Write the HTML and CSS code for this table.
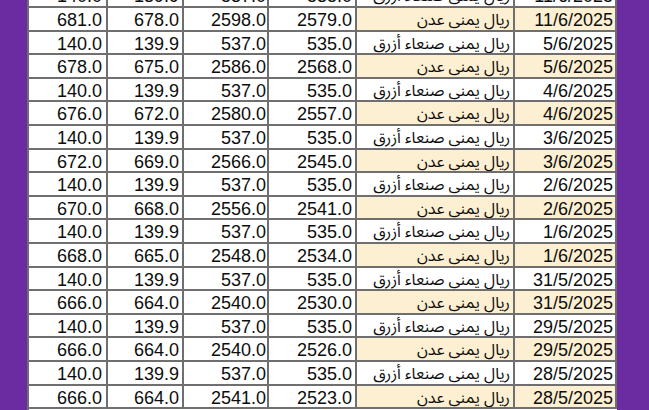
FILE: index.html
```html
<!DOCTYPE html>
<html lang="ar">
<head>
<meta charset="utf-8">
<title>أسعار الصرف</title>
<link rel="stylesheet" href="styles.css">
</head>
<body>
<div class="page">
  <div class="side side-left"></div>
  <div class="sheet">
    <div class="rows">
      <div class="row"><div class="c c1">140.0</div><div class="c c2">139.9</div><div class="c c3">537.0</div><div class="c c4">535.0</div><div class="c ar sanaa">ريال يمني صنعاء أزرق</div><div class="c dt">11/6/2025</div></div>
      <div class="row aden"><div class="c c1">681.0</div><div class="c c2">678.0</div><div class="c c3">2598.0</div><div class="c c4">2579.0</div><div class="c ar">ريال يمني عدن</div><div class="c dt">11/6/2025</div></div>
      <div class="row"><div class="c c1">140.0</div><div class="c c2">139.9</div><div class="c c3">537.0</div><div class="c c4">535.0</div><div class="c ar sanaa">ريال يمني صنعاء أزرق</div><div class="c dt">5/6/2025</div></div>
      <div class="row aden"><div class="c c1">678.0</div><div class="c c2">675.0</div><div class="c c3">2586.0</div><div class="c c4">2568.0</div><div class="c ar">ريال يمني عدن</div><div class="c dt">5/6/2025</div></div>
      <div class="row"><div class="c c1">140.0</div><div class="c c2">139.9</div><div class="c c3">537.0</div><div class="c c4">535.0</div><div class="c ar sanaa">ريال يمني صنعاء أزرق</div><div class="c dt">4/6/2025</div></div>
      <div class="row aden"><div class="c c1">676.0</div><div class="c c2">672.0</div><div class="c c3">2580.0</div><div class="c c4">2557.0</div><div class="c ar">ريال يمني عدن</div><div class="c dt">4/6/2025</div></div>
      <div class="row"><div class="c c1">140.0</div><div class="c c2">139.9</div><div class="c c3">537.0</div><div class="c c4">535.0</div><div class="c ar sanaa">ريال يمني صنعاء أزرق</div><div class="c dt">3/6/2025</div></div>
      <div class="row aden"><div class="c c1">672.0</div><div class="c c2">669.0</div><div class="c c3">2566.0</div><div class="c c4">2545.0</div><div class="c ar">ريال يمني عدن</div><div class="c dt">3/6/2025</div></div>
      <div class="row"><div class="c c1">140.0</div><div class="c c2">139.9</div><div class="c c3">537.0</div><div class="c c4">535.0</div><div class="c ar sanaa">ريال يمني صنعاء أزرق</div><div class="c dt">2/6/2025</div></div>
      <div class="row aden"><div class="c c1">670.0</div><div class="c c2">668.0</div><div class="c c3">2556.0</div><div class="c c4">2541.0</div><div class="c ar">ريال يمني عدن</div><div class="c dt">2/6/2025</div></div>
      <div class="row"><div class="c c1">140.0</div><div class="c c2">139.9</div><div class="c c3">537.0</div><div class="c c4">535.0</div><div class="c ar sanaa">ريال يمني صنعاء أزرق</div><div class="c dt">1/6/2025</div></div>
      <div class="row aden"><div class="c c1">668.0</div><div class="c c2">665.0</div><div class="c c3">2548.0</div><div class="c c4">2534.0</div><div class="c ar">ريال يمني عدن</div><div class="c dt">1/6/2025</div></div>
      <div class="row"><div class="c c1">140.0</div><div class="c c2">139.9</div><div class="c c3">537.0</div><div class="c c4">535.0</div><div class="c ar sanaa">ريال يمني صنعاء أزرق</div><div class="c dt">31/5/2025</div></div>
      <div class="row aden"><div class="c c1">666.0</div><div class="c c2">664.0</div><div class="c c3">2540.0</div><div class="c c4">2530.0</div><div class="c ar">ريال يمني عدن</div><div class="c dt">31/5/2025</div></div>
      <div class="row"><div class="c c1">140.0</div><div class="c c2">139.9</div><div class="c c3">537.0</div><div class="c c4">535.0</div><div class="c ar sanaa">ريال يمني صنعاء أزرق</div><div class="c dt">29/5/2025</div></div>
      <div class="row aden"><div class="c c1">666.0</div><div class="c c2">664.0</div><div class="c c3">2540.0</div><div class="c c4">2526.0</div><div class="c ar">ريال يمني عدن</div><div class="c dt">29/5/2025</div></div>
      <div class="row"><div class="c c1">140.0</div><div class="c c2">139.9</div><div class="c c3">537.0</div><div class="c c4">535.0</div><div class="c ar sanaa">ريال يمني صنعاء أزرق</div><div class="c dt">28/5/2025</div></div>
      <div class="row aden"><div class="c c1">666.0</div><div class="c c2">664.0</div><div class="c c3">2541.0</div><div class="c c4">2523.0</div><div class="c ar">ريال يمني عدن</div><div class="c dt">28/5/2025</div></div>
    </div>
  </div>
  <div class="side side-right"></div>
</div>
</body>
</html>
```

FILE: styles.css
```css
html, body {
  margin: 0;
  padding: 0;
  background: #6b2ca2;
}

.page {
  display: flex;
  width: 649px;
  height: 410px;
  overflow: hidden;
  background: #6b2ca2;
}

.side-left {
  width: 27px;
  flex: none;
}

.side-right {
  flex: 1;
}

.sheet {
  flex: none;
  width: 590px;
  height: 410px;
  overflow: hidden;
  background: #ffffff;
  border-left: 2px solid #6f6f6f;
  box-sizing: border-box;
}

.rows {
  margin-top: -15.6px;
}

.row {
  display: grid;
  grid-template-columns: 79px 76px 85px 88px 158px 102px;
  height: 23.6px;
  background: #ffffff;
}

.c {
  box-sizing: border-box;
  height: 23.6px;
  border-right: 2px solid #6f6f6f;
  border-bottom: 2px solid #6f6f6f;
  padding: 3px 3px 0 0;
  text-align: right;
  font-family: "Liberation Sans", Arial, sans-serif;
  font-size: 18px;
  line-height: 18.6px;
  color: #0d0d0d;
  white-space: nowrap;
  overflow: hidden;
}

.c1 { padding-right: 4px; }
.c2 { padding-right: 3px; }
.c3 { padding-right: 1px; }
.c4 { padding-right: 3px; }
.dt { padding-right: 2px; }

.ar {
  font-family: "Noto Sans Arabic", "DejaVu Sans", "Liberation Sans", sans-serif;
  font-size: 16px;
  padding-right: 3px;
}

.aden .ar,
.aden .dt {
  background: #fdefd1;
}
```
